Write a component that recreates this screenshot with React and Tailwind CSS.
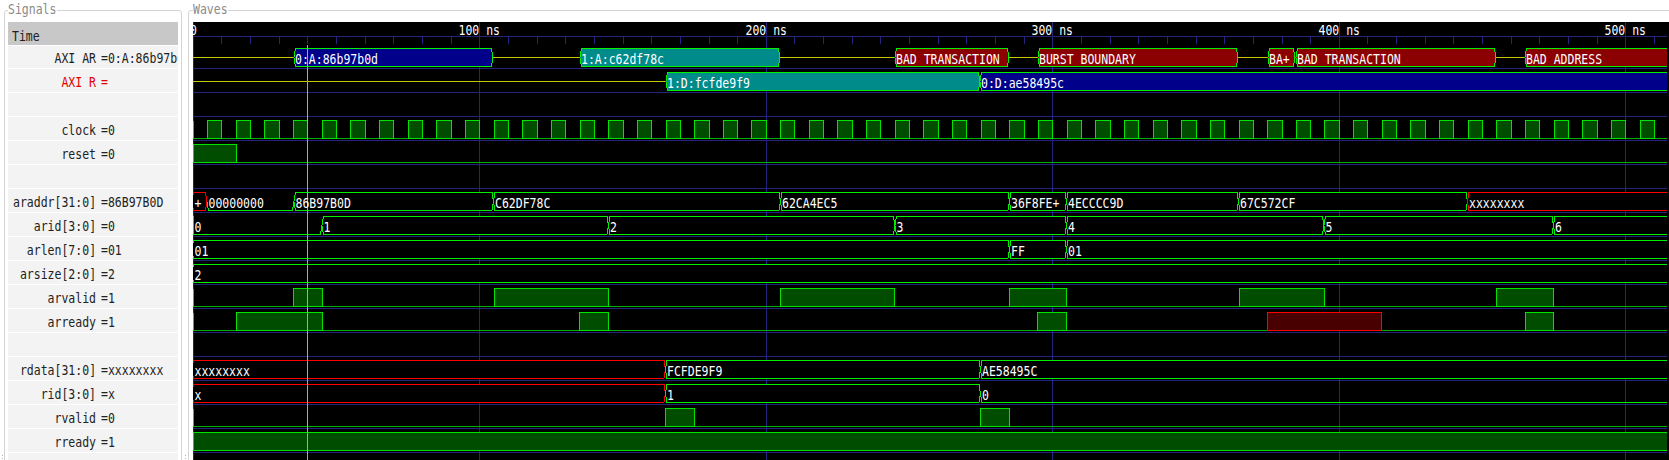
const GREEN = "#00f000";
const HIGH = "#00e400";
const LOW = "#00b000";
const GRID = "#24247e";
const FILLS = { blue: "#00008b", teal: "#008b8b", red: "#8b0000" };

const signals = [
  { name: "AXI AR", value: "=0:A:86b97b0d" },
  { name: "AXI R", value: "=", red: true },
  {},
  { name: "clock", value: "=0" },
  { name: "reset", value: "=0" },
  {},
  { name: "araddr[31:0]", value: "=86B97B0D" },
  { name: "arid[3:0]", value: "=0" },
  { name: "arlen[7:0]", value: "=01" },
  { name: "arsize[2:0]", value: "=2" },
  { name: "arvalid", value: "=1" },
  { name: "arready", value: "=1" },
  {},
  { name: "rdata[31:0]", value: "=xxxxxxxx" },
  { name: "rid[3:0]", value: "=x" },
  { name: "rvalid", value: "=0" },
  { name: "rready", value: "=1" },
  {},
];

// [start, end, fill, text]
const txRows = [
  {
    row: 0,
    bars: [
      [294, 493, "blue", "0:A:86b97b0d"],
      [580, 780, "teal", "1:A:c62df78c"],
      [895, 1009, "red", "BAD TRANSACTION"],
      [1038, 1238, "red", "BURST BOUNDARY"],
      [1268, 1295, "red", "BA+"],
      [1296, 1496, "red", "BAD TRANSACTION"],
      [1525, 1680, "red", "BAD ADDRESS"],
    ],
  },
  {
    row: 1,
    bars: [
      [666, 980, "teal", "1:D:fcfde9f9"],
      [980, 1680, "blue", "0:D:ae58495c"],
    ],
  },
];

// kind: "x" is drawn red, "zero" only has its bottom line
const busRows = [
  {
    row: 6,
    bars: [
      [192, 207, "x", "+"],
      [207, 294, "zero", "00000000"],
      [294, 493.5, "", "86B97B0D"],
      [493.5, 780.5, "", "C62DF78C"],
      [780.5, 1009.5, "", "62CA4EC5"],
      [1009.5, 1066.5, "", "36F8FE+"],
      [1066.5, 1238.5, "", "4ECCCC9D"],
      [1238.5, 1467.5, "", "67C572CF"],
      [1467.5, 1680, "x", "xxxxxxxx"],
    ],
  },
  {
    row: 7,
    bars: [
      [192, 322, "zero", "0"],
      [322, 608.5, "", "1"],
      [608.5, 895, "", "2"],
      [895, 1066.5, "", "3"],
      [1066.5, 1324, "", "4"],
      [1324, 1553.5, "", "5"],
      [1553.5, 1680, "", "6"],
    ],
  },
  {
    row: 8,
    bars: [
      [192, 1009.5, "", "01"],
      [1009.5, 1066.5, "", "FF"],
      [1066.5, 1680, "", "01"],
    ],
  },
  { row: 9, bars: [[192, 1680, "", "2"]] },
  { row: 13, bars: [[192, 665.5, "x", "xxxxxxxx"], [665.5, 980.5, "", "FCFDE9F9"], [980.5, 1680, "", "AE58495C"]] },
  { row: 14, bars: [[192, 665.5, "x", "x"], [665.5, 980.5, "", "1"], [980.5, 1680, "zero", "0"]] },
];

const clockHighs = [];
for (let k = 0; k < 52; k++) {
  const rise = 192.8 + 14.325 + 28.65 * k;
  clockHighs.push([Math.round(rise), Math.round(rise + 14.325)]);
}

const bitRows = [
  { row: 3, highs: clockHighs },
  { row: 4, highs: [[193, 236]] },
  { row: 10, highs: [[293, 322], [494, 608], [780, 894], [1009, 1066], [1239, 1324], [1496, 1553]] },
  { row: 11, highs: [[236, 322], [579, 608], [1037, 1066], [1525, 1553]], bad: [[1267, 1381]] },
  { row: 15, highs: [[665, 694], [980, 1009]] },
  { row: 16, highs: [[193, 1680]] },
];

const topOf = (row) => 48 + 24 * row;
const tickX = (k) => Math.round(192.8 + 28.65 * k) + 0.5;

const Label = ({ x, y, children, width }) => (
  <text x={x} y={y} fill="#ffffff" textLength={width ?? String(children).length * 6.92} lengthAdjust="spacingAndGlyphs">
    {children}
  </text>
);

const hexPoints = (a, b, row, d = 1.5) => {
  const t = topOf(row) + 0.5;
  const bot = t + 18;
  const mid = t + 9;
  return `${a + d},${t} ${b - d},${t} ${b},${mid} ${b - d},${bot} ${a + d},${bot} ${a},${mid}`;
};

const zeroPoints = (a, b, row, d = 1.5) => {
  const bot = topOf(row) + 18.5;
  const mid = bot - 9;
  return `${a},${mid} ${a + d},${bot} ${b - d},${bot} ${b},${mid}`;
};

const Waves = () => {
  const ticks = Array.from({ length: 52 }, (_, k) => k);
  const rows = Array.from({ length: 17 }, (_, k) => 68.5 + 24 * k);

  return (
    <svg viewBox="193 22 1474 438" className="block h-[438px] w-[1474px] text-[13.3px]">
      <g shapeRendering="crispEdges">
        <line x1="193" x2="1669" y1="36.5" y2="36.5" stroke={GRID} />
        {rows.map((y) => (
          <line key={y} x1="193" x2="1669" y1={y} y2={y} stroke={GRID} />
        ))}
        {ticks.map((k) => (
          <line key={k} x1={tickX(k)} x2={tickX(k)} y1={k % 10 === 0 ? 22 : 36} y2={k % 10 === 0 ? 460 : 44} stroke={GRID} />
        ))}

        {txRows.map(({ row, bars }) => (
          <g key={row}>
            <line x1="193" x2="1669" y1={topOf(row) + 9.5} y2={topOf(row) + 9.5} stroke="#c8c800" />
            {bars.map(([a, b, fill]) => (
              <polygon key={a} points={hexPoints(a, b, row)} fill={FILLS[fill]} stroke={GREEN} />
            ))}
          </g>
        ))}

        {busRows.map(({ row, bars }) => (
          <g key={row}>
            {bars.map(([a, b, kind]) =>
              kind === "zero" ? (
                <polyline key={a} points={zeroPoints(a, b, row)} fill="none" stroke={GREEN} />
              ) : (
                <polygon key={a} points={hexPoints(a, b, row)} fill="#000000" stroke={kind === "x" ? "#ff0000" : GREEN} />
              )
            )}
            {bars[0][2] === "zero" && <line x1="193.5" x2="193.5" y1={topOf(row)} y2={topOf(row) + 18} stroke={GREEN} />}
          </g>
        ))}

        {bitRows.map(({ row, highs, bad = [] }) => {
          const t = topOf(row) + 0.5;
          const bot = t + 18;
          return (
            <g key={row}>
              <line x1="193" x2="1669" y1={bot} y2={bot} stroke={LOW} />
              <line x1="193.5" x2="193.5" y1={t} y2={bot} stroke={HIGH} />
              {highs.map(([a, b]) => (
                <polygon key={a} points={`${a + 0.5},${bot} ${a + 0.5},${t} ${b + 0.5},${t} ${b + 0.5},${bot}`} fill="#004d00" stroke={HIGH} />
              ))}
              {bad.map(([a, b]) => (
                <rect key={a} x={a + 0.5} y={t} width={b - a} height={18} fill="#480000" stroke="#ff0000" />
              ))}
            </g>
          );
        })}

        <line x1="307.5" x2="307.5" y1="45" y2="460" stroke="#f08a80" />
      </g>

      <Label x={190} y={35}>0</Label>
      {[100, 200, 300, 400, 500].map((ns) => (
        <Label key={ns} x={tickX(ns / 10) - 21} y={35} width={41.5}>{`${ns} ns`}</Label>
      ))}

      {txRows.map(({ row, bars }) =>
        bars.map(([a, , , text]) => (
          <Label key={a} x={a + 1} y={topOf(row) + 16}>{text}</Label>
        ))
      )}
      {busRows.map(({ row, bars }) =>
        bars.map(([a, , , text]) => (
          <Label key={a} x={a < 193 ? 194.5 : a + 1.5} y={topOf(row) + 16}>{text}</Label>
        ))
      )}
    </svg>
  );
};

const SignalRow = ({ signal, first }) => (
  <div className={`mt-px flex shrink-0 items-center overflow-hidden bg-[#f3f3f3] pt-[4px] text-[13.3px] leading-none ${first ? "h-[22px]" : "h-[23px]"} ${signal.red ? "text-[#e00000]" : "text-[#222222]"}`}>
    <div className="flex w-[88px] shrink-0 justify-end">
      <span className="origin-right scale-x-[0.865] whitespace-nowrap">{signal.name}</span>
    </div>
    <span className="ml-[5px] origin-left scale-x-[0.865] whitespace-nowrap">{signal.value}</span>
  </div>
);

const Legend = ({ width, children }) => (
  <legend className={`h-[16px] overflow-visible text-[13.3px] leading-[16px] text-[#8a8a8a] ${width}`}>
    <span className="block origin-left scale-x-[0.865] whitespace-nowrap">{children}</span>
  </legend>
);

// the pane handle: two faint dots at the bottom of the gap
const Grip = ({ width }) => (
  <div className={`flex shrink-0 flex-col items-center gap-[2px] pt-[453px] ${width}`}>
    <div className="h-px w-px bg-[#b4b4b4]" />
    <div className="h-px w-px bg-[#b4b4b4]" />
  </div>
);

export default function App() {
  return (
    <div className="flex h-[460px] w-[1669px] overflow-hidden bg-white pt-[2px] font-['DejaVu_Sans_Mono',monospace]">
      <Grip width="w-[4px]" />
      <fieldset className="h-[480px] w-[178px] min-w-0 shrink-0 overflow-hidden rounded-[3px] border border-[#d4d4d4] px-[3px] pt-[4px]">
        <Legend width="w-[49px]">Signals</Legend>
        <div className="flex h-[23px] items-center bg-[#c8c8c8] pl-[4px] pt-[7px] text-[13.3px] leading-none text-[#222222]">
          <span className="origin-left scale-x-[0.865]">Time</span>
        </div>
        {signals.map((signal, i) => (
          <SignalRow key={i} signal={signal} first={i === 0} />
        ))}
      </fieldset>

      <Grip width="w-[6px]" />

      <fieldset className="h-[480px] w-[1500px] min-w-0 shrink-0 rounded-[3px] border border-[#d4d4d4] pl-[4px] pt-[4px]">
        <Legend width="w-[35px]">Waves</Legend>
        <div className="bg-black">
          <Waves />
        </div>
      </fieldset>
    </div>
  );
}
